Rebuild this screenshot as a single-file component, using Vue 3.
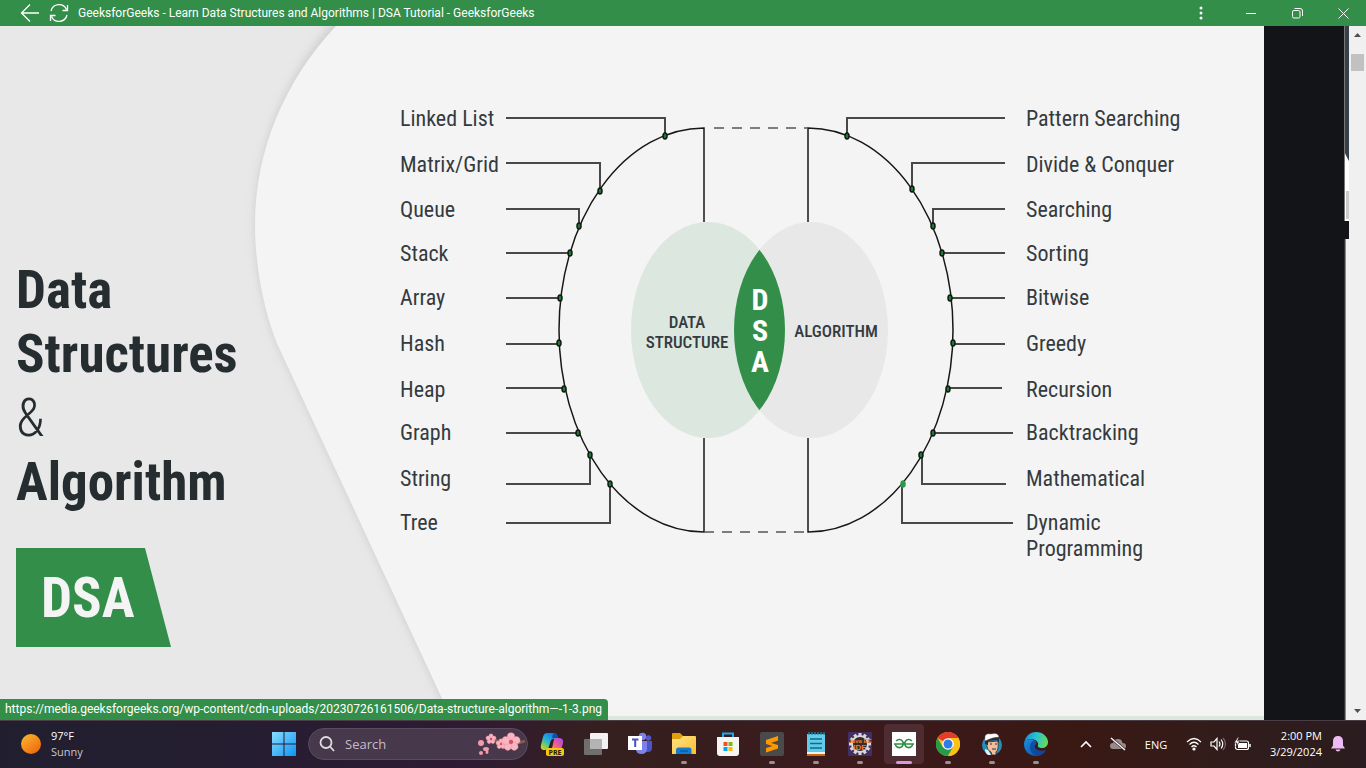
<script setup>
const structures = [
  { label: 'Linked List', y: 126, line: 'M506 118H665V136', dot: [665, 136] },
  { label: 'Matrix/Grid', y: 172, line: 'M506 163H600V191', dot: [600, 191] },
  { label: 'Queue', y: 217, line: 'M506 209H579V226', dot: [579, 226] },
  { label: 'Stack', y: 261, line: 'M506 253H570', dot: [570, 253] },
  { label: 'Array', y: 305, line: 'M506 298H560', dot: [560, 298] },
  { label: 'Hash', y: 351, line: 'M506 344H559', dot: [559, 343] },
  { label: 'Heap', y: 397, line: 'M506 388H564', dot: [564, 389] },
  { label: 'Graph', y: 440, line: 'M506 433H578', dot: [578, 433] },
  { label: 'String', y: 486, line: 'M506 484H590V455', dot: [590, 455] },
  { label: 'Tree', y: 530, line: 'M506 523H610V484', dot: [610, 484] }
]
const algorithms = [
  { label: 'Pattern Searching', y: 126, line: 'M1005 118H847V136', dot: [847, 136] },
  { label: 'Divide & Conquer', y: 172, line: 'M1005 163H912V189', dot: [912, 189] },
  { label: 'Searching', y: 217, line: 'M1005 209H933V226', dot: [933, 226] },
  { label: 'Sorting', y: 261, line: 'M1005 253H942', dot: [942, 253] },
  { label: 'Bitwise', y: 305, line: 'M1005 298H950', dot: [950, 298] },
  { label: 'Greedy', y: 351, line: 'M1005 344H953', dot: [953, 343] },
  { label: 'Recursion', y: 397, line: 'M1002 388H948', dot: [948, 389] },
  { label: 'Backtracking', y: 440, line: 'M1013 433H933', dot: [933, 433] },
  { label: 'Mathematical', y: 486, line: 'M1006 484H922V455', dot: [921, 455] },
  { label: 'Dynamic', y: 530, line: 'M1013 523H902V484', dot: [903, 484], bright: true }
]
const teeth = [0, 30, 60, 90, 120, 150, 180, 210, 240, 270, 300, 330]
</script>

<template>
  <div class="screen">
    <header class="titlebar">
      <button class="nav" aria-label="Back">
        <svg width="20" height="20" viewBox="0 0 20 20"><path d="M19 10H1.500M10 1.500L1.500 10L10 18.500" /></svg>
      </button>
      <button class="nav" aria-label="Refresh">
        <svg width="20" height="20" viewBox="0 0 20 20"><path d="M2 8A8.200 8.200 0 0 1 17.500 6.500M18.500 2V7.500H13.500M18 12A8.200 8.200 0 0 1 2.500 13.500M1.500 18V12.500H6.500" /></svg>
      </button>
      <span class="title">GeeksforGeeks - Learn Data Structures and Algorithms | DSA Tutorial - GeeksforGeeks</span>
      <button class="win dots" aria-label="More">
        <svg width="4" height="14" viewBox="0 0 4 14"><g fill="#fff" stroke="none"><circle cx="2" cy="2" r="1.500" /><circle cx="2" cy="7" r="1.500" /><circle cx="2" cy="12" r="1.500" /></g></svg>
      </button>
      <button class="win" aria-label="Minimize">
        <svg width="10" height="10" viewBox="0 0 10 10"><path d="M0 5.500H10" /></svg>
      </button>
      <button class="win" aria-label="Restore">
        <svg width="11" height="11" viewBox="0 0 11 11"><rect x="0.500" y="2.500" width="7.500" height="7.500" rx="1.500" /><path d="M2.500 .5H8A2.500 2.500 0 0 1 10.500 3V8" /></svg>
      </button>
      <button class="win" aria-label="Close">
        <svg width="11" height="11" viewBox="0 0 11 11"><path d="M.5 .5L10.500 10.500M10.500 .5L.5 10.500" /></svg>
      </button>
    </header>

    <main class="content">
      <a class="picture" href="#diagram" aria-label="Data Structures and Algorithm">
        <svg id="diagram" class="diagram" viewBox="0 26 1264 694" preserveAspectRatio="xMinYMin slice">
          <defs>
            <filter id="soft" x="-20%" y="-20%" width="140%" height="140%"><feGaussianBlur stdDeviation="5" /></filter>
            <clipPath id="lens"><ellipse cx="708" cy="330" rx="77" ry="108" /></clipPath>
          </defs>
          <rect y="26" width="1264" height="694" fill="#e8e8e8" />
          <path d="M336 20C285 76 255 150 255 225C255 270 266 320 280 350L456 730H1300V0H350Z" fill="#bbb" opacity=".6" filter="url(#soft)" />
          <path d="M336 26C285 80 255 150 255 225C255 270 266 320 280 350L452 720H1264V26Z" fill="#f4f4f4" />
          <rect y="716" width="1264" height="4" fill="#dce7df" />

          <g class="headline">
            <text x="16" y="308">Data</text>
            <text x="16" y="372">Structures</text>
            <text x="16" y="436" class="amp">&amp;</text>
            <text x="16" y="500">Algorithm</text>
          </g>
          <path d="M16 548H145L171 647H16Z" fill="#328e48" />
          <text x="41" y="617" class="badge">DSA</text>

          <g fill="none" stroke="#171717" stroke-width="1.500">
            <path d="M704 222V128A145 202 0 0 0 704 532V438" />
            <path d="M808 222V128A145 202 0 0 1 808 532V438" />
            <path d="M714 128H808M704 532H808" stroke="#555" stroke-dasharray="10 8" />
          </g>
          <ellipse cx="708" cy="330" rx="77" ry="108" fill="#dce7df" />
          <ellipse cx="811" cy="330" rx="77" ry="108" fill="#e8e8e8" />
          <ellipse cx="811" cy="330" rx="77" ry="108" fill="#328e48" clip-path="url(#lens)" />
          <g class="venn">
            <text x="687" y="328">DATA</text>
            <text x="687" y="348">STRUCTURE</text>
            <text x="836" y="337">ALGORITHM</text>
          </g>
          <g class="letters">
            <text x="760" y="310">D</text>
            <text x="760" y="341">S</text>
            <text x="760" y="372">A</text>
          </g>

          <g v-for="item in structures" :key="item.label">
            <path :d="item.line" class="wire" />
            <ellipse :cx="item.dot[0]" :cy="item.dot[1]" rx="2" ry="3" class="node" />
            <text x="400" :y="item.y" class="label">{{ item.label }}</text>
          </g>
          <g v-for="item in algorithms" :key="item.label">
            <path :d="item.line" class="wire" />
            <ellipse :cx="item.dot[0]" :cy="item.dot[1]" rx="2" ry="3" class="node" :class="{ bright: item.bright }" />
            <text x="1026" :y="item.y" class="label">{{ item.label }}</text>
          </g>
          <text x="1026" y="556" class="label">Programming</text>
        </svg>
      </a>
      <div class="gutter"></div>
      <div class="edge">
        <svg width="5" height="694" viewBox="0 0 5 694">
          <rect width="5" height="694" fill="#f0f0f0" />
          <rect width="5" height="195" fill="#fff" />
          <path d="M0 0H5V135Q2 130 0 125Z" fill="#36404d" />
          <path d="M.5 0V195" stroke="#777" />
          <rect x="2" y="165" width="3" height="28" fill="#ccc" />
          <rect y="195" width="5" height="18" fill="#121418" />
          <path d="M.5 213V694" stroke="#333" /><path d="M1.500 213V694" stroke="#888" />
        </svg>
      </div>
      <div class="scrollbar">
        <svg width="17" height="17" viewBox="0 0 17 17"><path d="M5 11L8.500 7L12 11Z" fill="#505050" /></svg>
        <div class="thumb"></div>
        <svg class="down" width="17" height="17" viewBox="0 0 17 17"><path d="M5 6L8.500 10L12 6Z" fill="#505050" /></svg>
      </div>
      <div class="status">https://media.geeksforgeeks.org/wp-content/cdn-uploads/20230726161506/Data-structure-algorithm—-1-3.png</div>
    </main>

    <footer class="taskbar">
      <button class="weather">
        <svg width="20" height="20" viewBox="0 0 20 20"><defs><linearGradient id="sun" x1="0" y1="0" x2=".8" y2="1"><stop stop-color="#f9bd2f" /><stop offset="1" stop-color="#f0650e" /></linearGradient></defs><circle cx="10" cy="10" r="10" fill="url(#sun)" /></svg>
        <span><b>97°F</b><i>Sunny</i></span>
      </button>

      <nav class="apps">
        <button class="app" aria-label="Start">
          <svg width="24" height="24" viewBox="0 0 24 24"><defs><linearGradient id="wn" x1="0" y1="0" x2="1" y2="1"><stop stop-color="#8adcff" /><stop offset="1" stop-color="#0c93f5" /></linearGradient></defs><path d="M0 0H11.500V11.500H0ZM12.500 0H24V11.500H12.500ZM0 12.500H11.500V24H0ZM12.500 12.500H24V24H12.500Z" fill="url(#wn)" /></svg>
        </button>
        <label class="search">
          <svg width="16" height="16" viewBox="0 0 16 16"><circle cx="7" cy="6.500" r="5.500" fill="none" stroke="#ddd" stroke-width="1.800" /><path d="M11 10.500L15 15" stroke="#ddd" stroke-width="1.800" /></svg>
          <input type="text" placeholder="Search" aria-label="Search" />
          <svg width="50" height="24" viewBox="0 0 50 24">
            <path d="M12 8Q20 7 26 11T49 9" fill="none" stroke="#8a5f48" stroke-width="2.500" />
            <g v-for="(f, n) in [[15, 7, 5], [25, 12, 5], [35, 10, 9]]" :key="n" :transform="`translate(${f[0]} ${f[1]})`">
              <ellipse v-for="a in [0, 72, 144, 216, 288]" :key="a" :cy="-f[2] * 0.58" :rx="f[2] * 0.42" :ry="f[2] * 0.46" fill="#f9b6c2" stroke="#e98a9d" stroke-width=".4" :transform="`rotate(${a})`" />
              <circle :r="f[2] * 0.24" fill="#d2546c" />
            </g>
            <g fill="#f49aac"><circle cx="5" cy="11" r="3" /><ellipse cx="10" cy="17" rx="3" ry="2" /><circle cx="5" cy="21" r="2" /><ellipse cx="11" cy="20" rx="1.500" ry="2" /></g>
          </svg>
        </label>
        <button class="app" aria-label="Copilot">
          <svg width="24" height="24" viewBox="0 0 24 24">
            <defs>
              <linearGradient id="ca" x1=".7" y1="0" x2="0" y2="1"><stop stop-color="#1576e8" /><stop offset=".45" stop-color="#23b5d6" /><stop offset=".75" stop-color="#8fce4b" /><stop offset="1" stop-color="#f5c925" /></linearGradient>
              <linearGradient id="cb" x1="1" y1="0" x2="0" y2="1"><stop stop-color="#9b4df0" /><stop offset=".5" stop-color="#e9579d" /><stop offset="1" stop-color="#f89457" /></linearGradient>
            </defs>
            <path d="M7 1H14Q17 1 18 6L13 7Q11 7 10 11L8.500 16Q8 18 5 18H3Q0 17 1 13L3 5Q4 1 7 1Z" fill="url(#ca)" />
            <path d="M14 1Q17 1 18 6H12Q13 1 14 1Z" fill="#174ca8" />
            <path d="M15 6H20Q24 7 23 11L21 18H11Q12 17 13 12Q14 6 15 6Z" fill="url(#cb)" />
            <rect x="6" y="16" width="18" height="8" rx="2" fill="#fbc60c" />
            <text x="15" y="23" class="pre">PRE</text>
          </svg>
        </button>
        <button class="app" aria-label="Task view">
          <svg width="24" height="24" viewBox="0 0 24 24"><rect x="6" y="1" width="18" height="16" rx="1" fill="#f2f2f2" /><rect y="7" width="18" height="16" rx="1" fill="#777" fill-opacity=".9" /><rect x="6" y="7" width="12" height="10" fill="#b4b4b4" /></svg>
        </button>
        <button class="app" aria-label="Teams">
          <svg width="24" height="24" viewBox="0 0 24 24"><circle cx="20.500" cy="6" r="2.700" fill="#5558c9" /><path d="M17 9H24V16Q24 20 20 20H17Z" fill="#4f54c4" /><circle cx="14.500" cy="4.500" r="3.700" fill="#7b83eb" /><path d="M8 9H19V16Q19 22 13.500 22T8 17Z" fill="#7b83eb" /><rect y="4" width="14" height="14" fill="#fff" /><path d="M4 7.500H10.500M7.200 7.500V15" stroke="#4b53bc" stroke-width="2" /></svg>
        </button>
        <button class="app running" aria-label="File Explorer">
          <svg width="24" height="24" viewBox="0 0 24 24"><defs><linearGradient id="fo" x1="0" y1="0" x2="1" y2="1"><stop stop-color="#ffe18a" /><stop offset="1" stop-color="#fbc02d" /></linearGradient></defs><path d="M0 2Q0 1 1 1H8L11 4V8H0Z" fill="#dca10b" /><path d="M0 7H8L11 4H23Q24 4 24 5V22H0Z" fill="url(#fo)" /><path d="M4 22V18Q4 15.500 6.500 15.500H17Q19.500 15.500 19.500 18V22Z" fill="#117bd0" /><path d="M8 19H16" stroke="#0a5ca5" stroke-width="1.500" /></svg>
        </button>
        <button class="app" aria-label="Microsoft Store">
          <svg width="24" height="24" viewBox="0 0 24 24"><path d="M7 6V1.500H17V6" fill="none" stroke="#20a8e8" stroke-width="2" /><path d="M1 5H23V21Q23 24 20 24H4Q1 24 1 21Z" fill="#f5f5f5" /><path d="M7.500 10H11.500V14H7.500Z" fill="#f25022" /><path d="M12.500 10H16.500V14H12.500Z" fill="#7fba00" /><path d="M7.500 15H11.500V19H7.500Z" fill="#00a4ef" /><path d="M12.500 15H16.500V19H12.500Z" fill="#ffb900" /></svg>
        </button>
        <button class="app running" aria-label="Sublime Text">
          <svg width="24" height="24" viewBox="0 0 24 24"><rect width="24" height="24" rx="2" fill="#4a4a4a" /><path d="M18 4V8.500L11 11L18 13V16.500L6 20.500V16L12.500 14L6 12V8Z" fill="#ff9800" /></svg>
        </button>
        <button class="app running" aria-label="Notepad">
          <svg width="24" height="24" viewBox="0 0 24 24"><rect x="3" y="2" width="18" height="20" fill="#62cbe9" /><path d="M3 20H21V22H3Z" fill="#f0f0f0" /><path d="M3 22H21V24H3Z" fill="#c46b16" /><path d="M5 0V3M8 0V3M11 0V3M14 0V3M17 0V3M20 0V3" stroke="#1e8cab" stroke-width="1.300" /><path d="M6 7H18M6 11.500H18M6 16H18" stroke="#0d6c8b" stroke-width="1.500" /></svg>
        </button>
        <button class="app running" aria-label="Java EE IDE">
          <svg width="24" height="24" viewBox="0 0 24 24"><rect width="24" height="24" rx="1" fill="#423064" /><g v-for="t in teeth" :key="t" :transform="`rotate(${t} 12 12)`"><rect x="10.500" y="1" width="3" height="5" fill="#d8d8d8" /></g><circle cx="12" cy="12" r="8" fill="#332a32" stroke="#d8d8d8" stroke-width="2" /><text x="12" y="11" class="ide">Java EE</text><text x="12" y="18" class="ide big">IDE</text></svg>
        </button>
        <button class="app running active" aria-label="GeeksforGeeks">
          <svg width="24" height="24" viewBox="0 0 24 24"><rect width="24" height="24" fill="#fff" /><path d="M2 12H22M4.200 9A4 4 0 1 1 3.300 12M19.800 9A4 4 0 1 0 20.700 12" fill="none" stroke="#2f8d46" stroke-width="1.600" /></svg>
        </button>
        <button class="app running" aria-label="Chrome">
          <svg width="24" height="24" viewBox="0 0 24 24"><circle cx="12" cy="12" r="12" fill="#fbc116" /><path d="M12 12L1.600 6A12 12 0 0 1 22.400 6H12Z" fill="#e33b2e" /><path d="M1.600 6A12 12 0 0 0 12 24L17.200 15L12 12L6.800 15Z" fill="#269c4b" /><path d="M12 6H22.400A12 12 0 0 1 12 24L17.200 15Z" fill="#fbc116" /><circle cx="12" cy="12" r="5.800" fill="#fff" /><circle cx="12" cy="12" r="4.500" fill="#2f7bea" /></svg>
        </button>
        <button class="app running" aria-label="Assistant">
          <svg width="24" height="24" viewBox="0 0 24 24"><circle cx="12" cy="13" r="10" fill="#2190bd" /><path d="M7 10Q6 18 11 20L12 23H16L16 20Q19 18 18 9Z" fill="#f2bd9b" stroke="#27272c" stroke-width=".8" /><path d="M5 12V7Q12 3 19 6V11L17 8L8 9V13Z" fill="#30282a" /><path d="M5 7Q4 1 11 2Q18 0 19 5Q13 5 5 9Z" fill="#fff" stroke="#555" stroke-width=".4" /><path d="M10 12H12M15 12H17M12 17H16" stroke="#333" /><path d="M5 17L8 18L11 23H8Q5 21 5 17Z" fill="#eee" /></svg>
        </button>
        <button class="app running" aria-label="Edge">
          <svg width="24" height="24" viewBox="0 0 24 24"><defs><linearGradient id="ea" x1="0" y1=".3" x2="1" y2=".5"><stop stop-color="#168ddc" /><stop offset=".5" stop-color="#2ac3d2" /><stop offset="1" stop-color="#62dc58" /></linearGradient><linearGradient id="eb" x1="0" y1="0" x2="1" y2="1"><stop stop-color="#168fe4" /><stop offset="1" stop-color="#0c4aa0" /></linearGradient></defs><path d="M0 12C1 4 6 0 12 0C19 0 24 5 24 10C24 14 21 16 18 16C15 16 13 15 14 13C15 11 12 7 7 7C3 7 0 9 0 12Z" fill="url(#ea)" /><path d="M0 12C0 8 4 6.500 8 7.500C12 8.500 13 11 12 12C9 14 11 19 17 19Q20 19 22 18C20 22 16 24 12 24C5 24 0 19 0 12Z" fill="url(#eb)" /><path d="M9 9C5 11 4 20 12 24C16 24 20 22 22 18Q17 20 13 17C9 14 12 11 12 11Q12 9 9 9Z" fill="#103f91" opacity=".7" /></svg>
        </button>
      </nav>

      <div class="tray">
        <button class="ico chev" aria-label="Hidden icons"><svg width="12" height="8" viewBox="0 0 12 8"><path d="M1 7L6 2L11 7" stroke-width="1.600" /></svg></button>
        <button class="ico cloud" aria-label="OneDrive"><svg width="18" height="14" viewBox="0 0 18 14"><path d="M4 12Q1 12 1 9T4 6Q5 2 9 2T13.500 6Q17 6 17 9T14 12Z" fill="#98898a" stroke="none" /><path d="M2 1L16 13" stroke="#3a2522" stroke-width="2.500" /><path d="M2 1L16 13" stroke-width="1.300" /></svg></button>
        <button class="lang">ENG</button>
        <button class="quick" aria-label="Network, volume and battery">
          <svg width="16" height="14" viewBox="0 0 16 14"><path d="M1 5Q8 -2 15 5M3.500 7.500Q8 3 12.500 7.500M5.500 10Q8 7.500 10.500 10" /><circle cx="8" cy="12" r="1.600" fill="#fff" stroke="none" /></svg>
          <svg width="16" height="14" viewBox="0 0 16 14"><path d="M1 5H4L7 1.500V12.500L4 9H1Z" /><path d="M9 4.500Q11 7 9 9.500M11 2.500Q14.500 7 11 11.500" /><path d="M13 1Q18 7 13 13" stroke="#776463" /></svg>
          <svg width="17" height="14" viewBox="0 0 17 14"><rect x="1.500" y="4" width="13" height="8.500" rx="2" /><rect x="4" y="6" width="9" height="5" fill="#fff" stroke="none" /><path d="M16 7V10" stroke-width="1.500" /><path d="M4 0L0 6H3L2 10L6 4H3.500L5 0Z" fill="#fff" stroke="#34201f" stroke-width=".7" /></svg>
        </button>
        <button class="clock"><span>2:00 PM</span><span>3/29/2024</span></button>
        <button class="ico bell" aria-label="Notifications"><svg width="14" height="16" viewBox="0 0 14 16"><path d="M0 12.500L2 9.500V5.500Q2 0 7 0T12 5.500V9.500L14 12.500ZM4.500 13.500H9.500Q9 15.500 7 15.500T4.500 13.500Z" fill="#eebcf4" stroke="none" /></svg></button>
      </div>
    </footer>
  </div>
</template>

<style>
html, body, #app { height: 100%; }
body { margin: 0; overflow: hidden; }
</style>

<style scoped>
.screen {
  height: 100%;
  display: grid;
  grid-template-rows: 26px minmax(0, 1fr) 48px;
  font-family: "Open Sans", "Noto Sans", sans-serif;
}
button { border: 0; padding: 0; background: none; color: #fff; font: inherit; display: flex; align-items: center; justify-content: center; }
svg { display: block; flex: none; }
.titlebar { display: flex; align-items: stretch; background: #328e48; color: #fff; padding-left: 20px; }
.titlebar svg { fill: none; stroke: #fff; stroke-width: 1.3; }
.nav { width: 20px; margin-right: 9px; }
.titlebar .win svg { stroke-width: 1; }
.title { font-size: 12px; line-height: 26px; white-space: nowrap; flex: 1; font-family: Roboto, sans-serif; }
.win { width: 46px; }
.dots { margin-right: 4px; }

.content { position: relative; display: flex; min-height: 0; background: #121418; }
.picture { flex: 1; min-width: 0; overflow: hidden; }
.diagram { width: 100%; height: 100%; }
.gutter { width: 80px; }
.edge { width: 5px; overflow: hidden; }
.scrollbar { width: 17px; background: #f0f0f0; display: flex; flex-direction: column; }
.thumb { height: 17px; margin: 11px 2px 0; background: #c1c1c1; }
.down { margin-top: auto; }
.status {
  position: absolute; left: 0; bottom: 0; height: 21px; box-sizing: border-box; padding: 0 6px 0 5px;
  background: #328e48; color: #fff; font-family: Roboto, sans-serif; font-size: 12px; line-height: 21px; border-top-right-radius: 4px; white-space: nowrap;
}

.diagram text { font-family: "Roboto Condensed", "Liberation Sans Narrow", Roboto, sans-serif; fill: #343b3f; }
.diagram .headline text { font-size: 53px; font-weight: 700; fill: #262d31; }
.diagram .headline .amp { font-weight: 300; }
.diagram .badge { font-size: 55px; font-weight: 700; fill: #f4f4f4; }
.diagram .label { font-size: 22px; }
.diagram .venn text { font-size: 17px; font-weight: 500; text-anchor: middle; }
.diagram .letters text { font-size: 30px; font-weight: 700; text-anchor: middle; fill: #fff; }
.wire { fill: none; stroke: #484848; stroke-width: 2; }
.node { fill: #1e7a35; stroke: #101a12; stroke-width: 1.5; }
.bright { fill: #2f9a4a; stroke: #2f9a4a; }

.taskbar {
  display: flex; align-items: stretch; color: #fff; box-shadow: inset 0 1px #4a3d45;
  background: linear-gradient(90deg, #211f2f 0%, #251d31 18%, #2f1b33 34%, #35201f 44%, #3c1a1d 62%, #3a1813 78%, #331c1a 88%, #2a1c20 100%);
}
.weather { width: 262px; justify-content: flex-start; padding-left: 21px; gap: 10px; font-size: 11px; line-height: 16px; text-align: left; }
.weather b, .weather i { display: block; font-weight: 400; font-style: normal; }
.weather i { color: #c9c5cd; }
.apps { display: flex; align-items: center; }
.app { width: 40px; height: 40px; margin: 0 2px; position: relative; border-radius: 4px; }
.search {
  width: 220px; height: 32px; box-sizing: border-box; margin: 0 2px; border-radius: 16px; border: 1px solid #5c4b60; background: #47384b;
  display: flex; align-items: center; padding: 0 1px 0 10px; gap: 10px;
}
.search input { flex: 1; min-width: 0; border: 0; padding: 0; background: none; outline: 0; color: #fff; font: 13px "Open Sans", sans-serif; }
.search input::placeholder { color: #c6bdc8; opacity: 1; }
.running::after { content: ""; position: absolute; bottom: 0; left: 17px; width: 6px; height: 3px; border-radius: 2px; background: #9c8f90; }
.active { background: #4e2d32; }
.active::after { left: 12px; width: 16px; background: #d69ade; }
.pre { font: 700 7px "Open Sans", sans-serif; text-anchor: middle; fill: #221a00; }
.ide { font: 700 6px "Liberation Sans", sans-serif; text-anchor: middle; fill: #f07d22; }
.big { font-size: 8px; }
.tray { margin-left: auto; display: flex; align-items: center; font-size: 11px; }
.tray svg { fill: none; stroke: #fff; stroke-width: 1.2; }
.ico { height: 40px; }
.chev { width: 32px; }
.cloud { width: 32px; }
.lang { width: 44px; }
.quick { gap: 8px; width: 76px; margin-left: 2px; }
.clock { flex-direction: column; align-items: flex-end; width: 62px; margin-left: 4px; line-height: 16px; }
.bell { width: 32px; margin-right: 12px; }
</style>
